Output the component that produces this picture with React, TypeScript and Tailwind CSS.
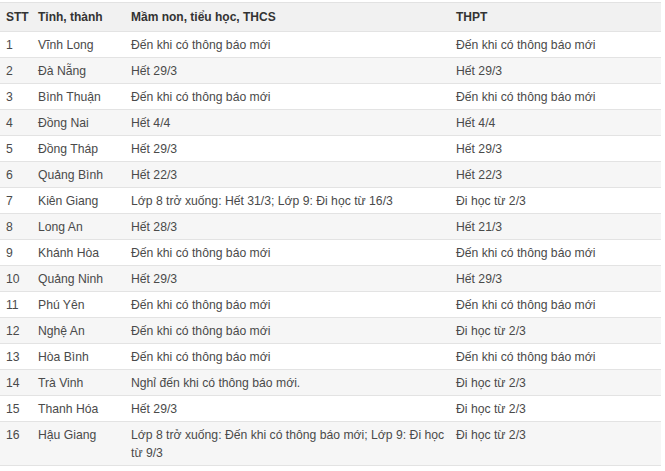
import React from "react";

const rows: [string, string, string, string][] = [
  ["1", "Vĩnh Long", "Đến khi có thông báo mới", "Đến khi có thông báo mới"],
  ["2", "Đà Nẵng", "Hết 29/3", "Hết 29/3"],
  ["3", "Bình Thuận", "Đến khi có thông báo mới", "Đến khi có thông báo mới"],
  ["4", "Đồng Nai", "Hết 4/4", "Hết 4/4"],
  ["5", "Đồng Tháp", "Hết 29/3", "Hết 29/3"],
  ["6", "Quảng Bình", "Hết 22/3", "Hết 22/3"],
  ["7", "Kiên Giang", "Lớp 8 trở xuống: Hết 31/3; Lớp 9: Đi học từ 16/3", "Đi học từ 2/3"],
  ["8", "Long An", "Hết 28/3", "Hết 21/3"],
  ["9", "Khánh Hòa", "Đến khi có thông báo mới", "Đến khi có thông báo mới"],
  ["10", "Quảng Ninh", "Hết 29/3", "Hết 29/3"],
  ["11", "Phú Yên", "Đến khi có thông báo mới", "Đến khi có thông báo mới"],
  ["12", "Nghệ An", "Đến khi có thông báo mới", "Đi học từ 2/3"],
  ["13", "Hòa Bình", "Đến khi có thông báo mới", "Đến khi có thông báo mới"],
  ["14", "Trà Vinh", "Nghỉ đến khi có thông báo mới.", "Đi học từ 2/3"],
  ["15", "Thanh Hóa", "Hết 29/3", "Đi học từ 2/3"],
  ["16", "Hậu Giang", "Lớp 8 trở xuống: Đến khi có thông báo mới; Lớp 9: Đi học từ 9/3", "Đi học từ 2/3"],
];

export default function App() {
  return (
    <div className="bg-white w-[665px] h-[471px] pt-[2px]" style={{ fontFamily: '"Liberation Sans", Arial, sans-serif' }}>
      <table className="w-[661px] table-fixed border-collapse text-[12.2px] leading-[18px] text-[#4a4a4a]">
        <colgroup>
          <col className="w-[32px]" />
          <col className="w-[93px]" />
          <col className="w-[325px]" />
          <col className="w-[211px]" />
        </colgroup>
        <thead>
          <tr className="bg-[#f1f1f1] border-t border-[#e2e2e2] text-[#333] font-bold text-[12px]">
            <th className="text-left pl-[6px] pr-[4px] h-[29px] py-0 align-middle">STT</th>
            <th className="text-left pl-[6px] pr-[4px] py-0 align-middle">Tỉnh, thành</th>
            <th className="text-left pl-[6px] pr-[4px] py-0 align-middle">Mầm non, tiểu học, THCS</th>
            <th className="text-left pl-[6px] pr-[4px] py-0 align-middle">THPT</th>
          </tr>
        </thead>
        <tbody>
          {rows.map((r, i) => (
            <tr key={r[0]} className={`border-t border-b border-[#e3e3e3] ${i % 2 === 1 ? "bg-[#f6f6f6]" : "bg-white"}`}>
              <td className="pl-[6px] pr-[4px] py-[3.5px] align-top">{r[0]}</td>
              <td className="pl-[6px] pr-[4px] py-[3.5px] align-top">{r[1]}</td>
              <td className="pl-[6px] pr-[4px] py-[3.5px] align-top">{r[2]}</td>
              <td className="pl-[6px] pr-[4px] py-[3.5px] align-top">{r[3]}</td>
            </tr>
          ))}
        </tbody>
      </table>
    </div>
  );
}
